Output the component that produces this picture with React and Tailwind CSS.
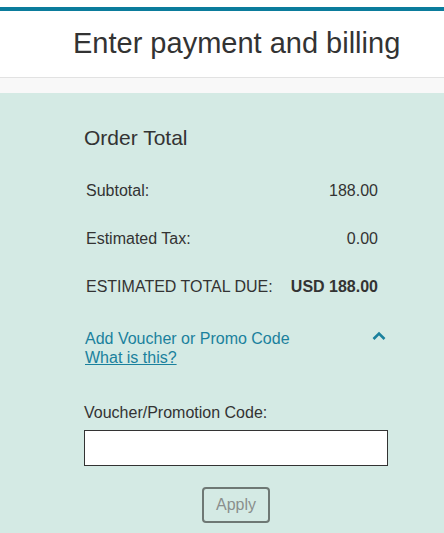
import React from 'react';

const Row = ({ label, value, bold }) => (
  <div className="flex items-center justify-between h-[48px] text-[16px] text-[#333]">
    <span>{label}</span>
    <span className={bold ? 'font-bold' : ''}>{value}</span>
  </div>
);

export default function App() {
  return (
    <div className="w-[444px] h-[533px] overflow-hidden bg-white font-['Liberation_Sans',Arial,sans-serif]">
      <div className="h-[7px] bg-white" />
      <div className="h-[4px] bg-[#0b7c9c]" />
      <div className="h-[66px] flex items-center pl-[73px] text-[29px] text-[#333]">
        Enter payment and billing
      </div>
      <div className="h-[16px] bg-[#f8f8f8] border-t border-[#e2e2e2]" />
      <div className="bg-[#d4eae4] h-[440px] pl-[84px] pr-[56px] pt-[33px]">
        <h2 className="text-[21px] text-[#333] leading-[24px]">Order Total</h2>
        <div className="mt-[17px] pl-[2px] pr-[10px]">
          <Row label="Subtotal:" value="188.00" />
          <Row label="Estimated Tax:" value="0.00" />
          <Row label="ESTIMATED TOTAL DUE:" value="USD 188.00" bold />
        </div>
        <div className="mt-[18px] flex items-start justify-between text-[#1a819d] text-[16px] leading-[19px]">
          <div className="pl-[1px]">
            <div>Add Voucher or Promo Code</div>
            <a href="#" className="underline">What is this?</a>
          </div>
          <svg width="14" height="10" viewBox="0 0 14 10" className="mt-[2px] mr-[2px]">
            <path d="M1.5 8 L7 2.5 L12.5 8" fill="none" stroke="#1a819d" strokeWidth="2.6" />
          </svg>
        </div>
        <div className="mt-[36px] text-[16px] text-[#333] leading-[19px]">Voucher/Promotion Code:</div>
        <input className="mt-[8px] w-[304px] h-[36px] bg-white border border-[#333] block" />
        <div className="w-[304px] flex justify-center mt-[21px]">
          <button className="w-[68px] h-[36px] border-2 border-[#6e7874] rounded-[4px] text-[16px] text-[#8a8f8d]">
            Apply
          </button>
        </div>
      </div>
    </div>
  );
}
